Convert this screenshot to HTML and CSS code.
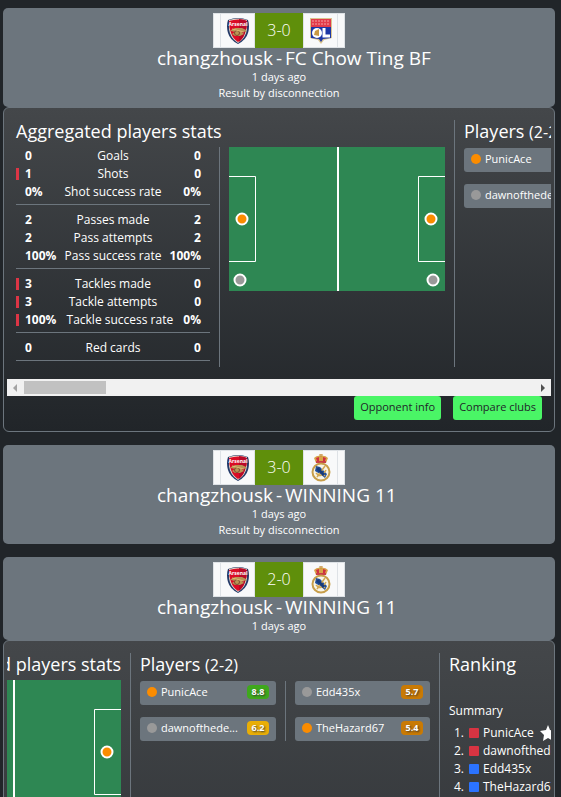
FILE: index.html
```html
<!DOCTYPE html>
<html lang="en">
<head>
<meta charset="utf-8">
<meta name="viewport" content="width=device-width, initial-scale=1">
<title>Match results</title>
<link rel="stylesheet" href="styles.css">
</head>
<body>
<svg class="defs" aria-hidden="true">
  <defs>
    <symbol id="arsenal" viewBox="0 0 22 26">
      <path d="M1 2Q11-2 21 2Q23 8 21 15Q19 22 11 26Q3 22 1 15Q-1 8 1 2Z" fill="#243a68"/>
      <path d="M2 2Q11-1 20 2L20 11Q19 20 11 25Q3 20 2 11Z" fill="#e9dccb"/>
      <path d="M2 3Q11 0 20 3Q20 10 18 15Q16 21 11 24Q6 21 4 15Q2 10 2 3Z" fill="#da0b26"/>
      <path d="M12 1Q16 1 20 3Q20 10 18 15Q16 21 12 24Z" fill="#b90a28"/>
      <text x="11" y="8" text-anchor="middle" class="crest-name">Arsenal</text>
      <path d="M4 12L8 10H15L19 12V14L14 13L17 16L13 18H8L5 16L8 14L4 13Z" fill="#b99554"/>
      <circle cx="10" cy="15" r="2.5" fill="none" stroke="#7c4930"/>
      <path d="M5 11L17 14" stroke="#e0bd75" stroke-width="1"/>
    </symbol>
    <symbol id="lyon" viewBox="0 0 24 26">
      <path d="M1 0H23V20L15 22L12 26L9 22L1 20Z" fill="#d9c48f"/>
      <path d="M2 1H22V9H2Z" fill="#e23b4a"/>
      <path d="M3 3H21M3 6H21" stroke="#f3a3a3" stroke-dasharray="2 1"/>
      <path d="M2 9H22V20L14 21L12 24L10 21L2 20Z" fill="#1c37a5"/>
      <circle cx="8" cy="15" r="5" fill="#fff"/>
      <path d="M5 17L6 13L10 11L10 18Z" fill="#c99943"/>
      <path d="M15 10V18H21" fill="none" stroke="#fff" stroke-width="3"/>
    </symbol>
    <symbol id="madrid" viewBox="0 0 20 28">
      <path d="M5 9L3 4Q6 1 10 2Q14 1 17 4L15 9Z" fill="#d8a348"/>
      <path d="M6 7L5 4L8 3V7M12 7V3L15 4L14 7" fill="#cf3042"/>
      <path d="M10 0V3M8 1H12" stroke="#c58e38"/>
      <path d="M5 8H15" stroke="#c94045" stroke-width="2"/>
      <circle cx="10" cy="18" r="8.500" fill="#f7f4e8" stroke="#c79e4a" stroke-width="2"/>
      <path d="M5 12L9 13L16 20L14 24L9 20L4 17Z" fill="#214f9b"/>
      <path d="M6 14L14 22M14 12L6 23M5 19Q10 25 15 16" fill="none" stroke="#d1a853" stroke-width="1.500"/>
      <path d="M6 14L13 21" stroke="#163b7d" stroke-width="3"/>
    </symbol>
    <symbol id="pitch" viewBox="0 0 216 144">
      <path d="M0 0H216V144H0Z" fill="#2e8753"/>
      <path d="M109 0V144" stroke="#fff" stroke-width="2"/>
      <path d="M0 29.500H26.500V114.500H0M216 29.500H189.500V114.500H216" fill="none" stroke="#fff"/>
      <g stroke="#fff" stroke-width="2">
        <circle cx="13" cy="72" r="5.500" fill="#fb8c00"/>
        <circle cx="202" cy="72" r="5.500" fill="#fb8c00"/>
        <circle cx="11" cy="133" r="5.500" fill="#999"/>
        <circle cx="204" cy="133" r="5.500" fill="#999"/>
      </g>
    </symbol>
  </defs>
</svg>
<main class="matches">
  <article class="match">
    <header class="match-head">
      <div class="score"><i></i><span class="crest"><svg width="22" height="26"><use href="#arsenal"/></svg></span><b>3-0</b><span class="crest"><svg width="24" height="26"><use href="#lyon"/></svg></span><i></i></div>
      <h2 class="teams"><span>changzhousk</span><span>-</span><span>FC Chow Ting BF</span></h2>
      <p>1 days ago</p>
      <p>Result by disconnection</p>
    </header>
    <div class="panel">
      <div class="viewport">
        <div class="strip">
          <section class="section">
            <h3>Aggregated players stats</h3>
            <div class="columns">
              <table class="stats">
                <tbody>
                  <tr><td>0</td><th scope="row">Goals</th><td>0</td></tr>
                  <tr class="lead"><td>1</td><th scope="row">Shots</th><td>0</td></tr>
                  <tr><td>0%</td><th scope="row">Shot success rate</th><td>0%</td></tr>
                </tbody>
                <tbody>
                  <tr><td>2</td><th scope="row">Passes made</th><td>2</td></tr>
                  <tr><td>2</td><th scope="row">Pass attempts</th><td>2</td></tr>
                  <tr><td>100%</td><th scope="row">Pass success rate</th><td>100%</td></tr>
                </tbody>
                <tbody>
                  <tr class="lead"><td>3</td><th scope="row">Tackles made</th><td>0</td></tr>
                  <tr class="lead"><td>3</td><th scope="row">Tackle attempts</th><td>0</td></tr>
                  <tr class="lead"><td>100%</td><th scope="row">Tackle success rate</th><td>0%</td></tr>
                </tbody>
                <tbody>
                  <tr><td>0</td><th scope="row">Red cards</th><td>0</td></tr>
                </tbody>
              </table>
              <div class="rule"></div>
              <svg class="pitch" width="216" height="144"><use href="#pitch"/></svg>
            </div>
          </section>
          <section class="section">
            <h3>Players <small>(2-2)</small></h3>
            <div class="columns">
              <ul class="players">
                <li><span class="dot orange"></span><span class="name">PunicAce</span></li>
                <li><span class="dot"></span><span class="name">dawnofthede...</span></li>
              </ul>
            </div>
          </section>
        </div>
      </div>
      <div class="scrollbar"><span class="arrow left"></span><span class="thumb"></span><span class="arrow right"></span></div>
      <div class="actions"><button type="button">Opponent info</button><button type="button">Compare clubs</button></div>
    </div>
  </article>

  <article class="match">
    <header class="match-head">
      <div class="score"><i></i><span class="crest"><svg width="22" height="26"><use href="#arsenal"/></svg></span><b>3-0</b><span class="crest"><svg width="20" height="28"><use href="#madrid"/></svg></span><i></i></div>
      <h2 class="teams"><span>changzhousk</span><span>-</span><span>WINNING 11</span></h2>
      <p>1 days ago</p>
      <p>Result by disconnection</p>
    </header>
  </article>

  <article class="match">
    <header class="match-head">
      <div class="score"><i></i><span class="crest"><svg width="22" height="26"><use href="#arsenal"/></svg></span><b>2-0</b><span class="crest"><svg width="20" height="28"><use href="#madrid"/></svg></span><i></i></div>
      <h2 class="teams"><span>changzhousk</span><span>-</span><span>WINNING 11</span></h2>
      <p>1 days ago</p>
    </header>
    <div class="panel tall">
      <div class="viewport">
        <div class="strip scrolled">
          <section class="section pitch-section">
            <h3>Aggregated players stats</h3>
            <div class="columns">
              <svg class="pitch" width="216" height="144"><use href="#pitch"/></svg>
            </div>
          </section>
          <section class="section">
            <h3>Players <small>(2-2)</small></h3>
            <div class="columns">
              <ul class="players">
                <li><span class="dot orange"></span><span class="name">PunicAce</span><span class="rating good">8.8</span></li>
                <li><span class="dot"></span><span class="name">dawnofthede...</span><span class="rating fair">6.2</span></li>
              </ul>
              <div class="rule"></div>
              <ul class="players">
                <li><span class="dot"></span><span class="name">Edd435x</span><span class="rating">5.7</span></li>
                <li><span class="dot orange"></span><span class="name">TheHazard67</span><span class="rating">5.4</span></li>
              </ul>
            </div>
          </section>
          <section class="section">
            <h3>Ranking</h3>
            <div class="ranking">
              <h4>Summary</h4>
              <ol>
                <li><span>1.</span><i class="red"></i>PunicAce<svg class="star" width="16" height="16" viewBox="0 0 16 16"><path d="M8 0L10 5L16 6L12 10L13 16L8 13L3 16L4 10L0 6L6 5Z" fill="#fff"/></svg></li>
                <li><span>2.</span><i class="red"></i>dawnofthedead</li>
                <li><span>3.</span><i></i>Edd435x</li>
                <li><span>4.</span><i></i>TheHazard67</li>
              </ol>
            </div>
          </section>
        </div>
      </div>
    </div>
  </article>
</main>
</body>
</html>
```
FILE: styles.css
```css
* { box-sizing: border-box; }

body {
  margin: 0;
  height: 100vh;
  overflow: hidden;
  background: #212529;
  color: #fff;
  font: 12px/18px "Open Sans", "Noto Sans", sans-serif;
}

h2, h3, h4, p, ul, ol { margin: 0; padding: 0; font-weight: 400; }
ul, ol { list-style: none; }
svg { display: block; flex: none; }
.defs { position: absolute; width: 0; height: 0; }

.matches {
  display: flex;
  flex-direction: column;
  gap: 13px;
  height: 100vh;
  overflow: hidden;
  padding: 8px 6px 0 3px;
}
.match { flex: none; }

.match-head {
  padding: 5px 5px 6px;
  border-radius: 5px;
  background: #6c757d;
  font-size: 11px;
  line-height: 16px;
  text-align: center;
}

.score { display: flex; justify-content: center; height: 35px; }
.score i, .crest { border: 1px solid #dee2e6; background: #f8f9fa; }
.score i { width: 7px; }
.score i:first-child { border-right: 0; }
.score i:last-child { border-left: 0; }
.crest { display: flex; align-items: center; justify-content: center; width: 35px; }
.crest-name { font: 700 5px "Open Sans", sans-serif; fill: #fff; }
.score b {
  width: 48px;
  background: #5f8f0b;
  font-size: 16px;
  font-weight: 300;
  line-height: 35px;
}

.teams {
  display: grid;
  grid-template-columns: 1fr auto 1fr;
  gap: 3px;
  margin-bottom: 1px;
  font-size: 19px;
  line-height: 20px;
  white-space: nowrap;
}
.teams span:first-child { text-align: right; }
.teams span:last-child { text-align: left; }

.panel {
  padding: 3px 3px 11px;
  border: 1px solid #6c757d;
  border-radius: 6px;
  background: linear-gradient(#44474a, #212529);
}
.tall { min-height: 480px; }

.viewport { overflow: hidden; }
.strip { display: flex; width: max-content; padding: 9px 9px 12px; }
.scrolled { margin-left: -324px; min-height: 440px; }

.section + .section { margin-left: 9px; padding-left: 9px; border-left: 1px solid #6c757d; }
.section h3 { margin-bottom: 5px; font-size: 18px; line-height: 22px; white-space: nowrap; }
.section small { font-size: 16px; }
.pitch-section { width: 429px; }
.pitch-section h3 { text-align: right; }
.pitch-section .columns { justify-content: flex-end; }

.columns { display: flex; align-items: flex-start; gap: 9px; }
.rule { align-self: stretch; width: 1px; background: #6c757d; }

.stats { display: block; width: 194px; }
.stats tbody {
  display: block;
  margin-bottom: 6px;
  padding-bottom: 3px;
  border-bottom: 1px solid #6c757d;
}
.stats tr {
  display: flex;
  justify-content: space-between;
  padding: 0 9px;
  background: linear-gradient(#dc3545, #dc3545) no-repeat 0 3px / 0 12px;
}
.stats .lead { background-size: 3px 12px; }
.stats td { padding: 0; font-weight: 700; }
.stats th { padding: 0; font-weight: 400; white-space: nowrap; }

.players { display: flex; flex-direction: column; gap: 12px; width: 136px; }
.rule + .players { width: 135px; }
.players li {
  display: flex;
  align-items: center;
  height: 24px;
  padding: 0 7px 2px;
  border-radius: 3px;
  background: #6c757d;
  font-size: 11px;
}
.players .name { flex: 1; white-space: nowrap; }
.dot { width: 10px; height: 10px; margin-right: 4px; border-radius: 50%; background: #999; }
.orange { background: #fb8c00; }
.rating {
  width: 22px;
  border-radius: 4px;
  background: #c97a04;
  font-size: 9px;
  font-weight: 700;
  line-height: 14px;
  text-align: center;
  text-shadow: 1px 1px 2px #333;
}
.good { background: #3fa81c; }
.fair { background: #e9ae06; }

.columns:has(.players + .rule) { padding-bottom: 12px; }

.ranking { padding-top: 22px; }
.ranking h4 { margin-bottom: 4px; font-size: 12px; }
.ranking li { display: flex; align-items: center; white-space: nowrap; }
.ranking span { width: 15px; text-align: right; }
.ranking i { width: 10px; height: 10px; margin: 0 4px 0 5px; border-radius: 1px; background: #2b73ff; }
.ranking .red { background: #d73442; }
.star { margin-left: 6px; }

.scrollbar { display: flex; align-items: center; height: 17px; padding: 0 6px; background: #f1f1f1; }
.thumb { width: 82px; height: 13px; margin-left: 7px; background: #c1c1c1; }
.arrow { border: 4px solid transparent; }
.arrow.left { border-left: 0; border-right-color: #a3a3a3; }
.arrow.right { margin-left: auto; border-right: 0; border-left-color: #505050; }

.actions { display: flex; justify-content: flex-end; gap: 12px; padding-right: 9px; }
.actions button {
  height: 24px;
  padding: 0 6px 2px;
  border: 0;
  border-radius: 3px;
  background: #4af566;
  color: #212529;
  font: 11px/22px "Open Sans", "Noto Sans", sans-serif;
}
```
